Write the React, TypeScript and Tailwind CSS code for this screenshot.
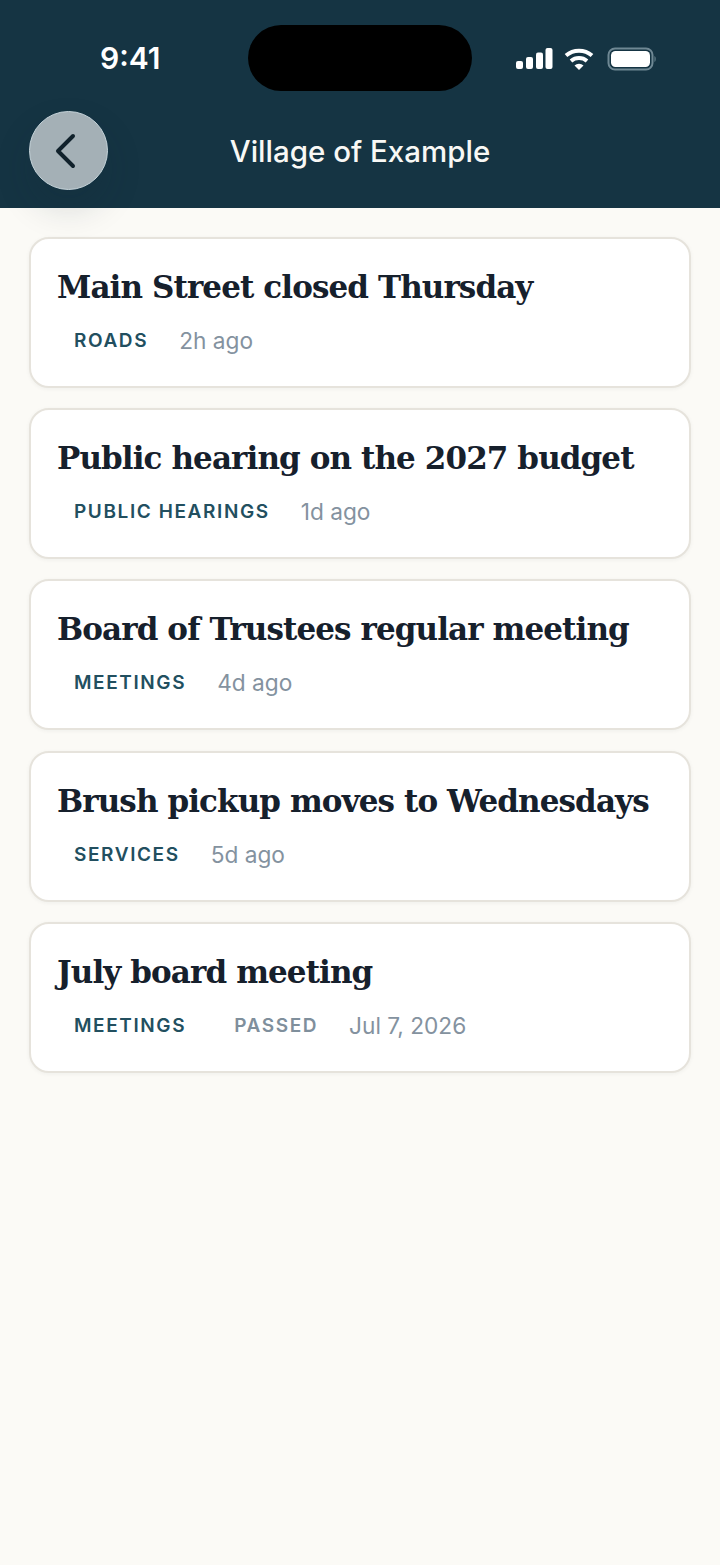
const items = [
  { title: "Main Street closed Thursday", tag: "ROADS", when: "2h ago" },
  { title: "Public hearing on the 2027 budget", tag: "PUBLIC HEARINGS", when: "1d ago" },
  { title: "Board of Trustees regular meeting", tag: "MEETINGS", when: "4d ago" },
  { title: "Brush pickup moves to Wednesdays", tag: "SERVICES", when: "5d ago" },
  { title: "July board meeting", tag: "MEETINGS", extra: "PASSED", when: "Jul 7, 2026" },
];

function StatusIcons() {
  return (
    <svg width="140" height="26" viewBox="0 0 140 26" fill="none">
      <rect x="0" y="16" width="7" height="8" rx="2" fill="#fff" />
      <rect x="10" y="12" width="7" height="12" rx="2" fill="#fff" />
      <rect x="20" y="7.500" width="7" height="16.500" rx="2" fill="#fff" />
      <rect x="29.500" y="3" width="7" height="21" rx="2" fill="#fff" />
      <path d="M50 10.500a20 20 0 0 1 26 0" stroke="#fff" strokeWidth="4" />
      <path d="M55 16a12.500 12.500 0 0 1 16 0" stroke="#fff" strokeWidth="4" />
      <path d="M58.500 20.500a6.500 6.500 0 0 1 9 0L63 25z" fill="#fff" />
      <rect x="92.500" y="3.500" width="44" height="21" rx="6.500" stroke="#6f8894" strokeWidth="2" />
      <rect x="95" y="6" width="39" height="16" rx="4.500" fill="#fff" />
      <path d="M138.500 11v6c1.500-.5 1.500-5.500 0-6z" fill="#6f8894" />
    </svg>
  );
}

export default function App() {
  return (
    <div className="min-h-[1565px] bg-[#fbfaf6] font-['Inter',sans-serif]">
      {/* Header */}
      <header className="relative h-[208px] bg-[#153443]">
        <div className="flex h-[133px] items-start justify-between">
          <span className="mt-[39px] ml-[100px] text-[30px] leading-[38px] font-semibold text-white">9:41</span>
          <div className="absolute top-[25px] left-[248px] h-[66px] w-[224px] rounded-[33px] bg-black" />
          <div className="mt-[45px] mr-[64px]">
            <StatusIcons />
          </div>
        </div>
        <h1 className="text-center text-[29.500px] leading-[36px] font-medium text-[#f8f8f5]">Village of Example</h1>
        <button
          type="button"
          className="absolute top-[111px] left-[29px] flex h-[79px] w-[79px] items-center justify-center rounded-full border border-[#c6d4da] bg-[#a4b0b6] shadow-[0_18px_36px_rgba(20,40,50,0.16)]"
        >
          <svg width="24" height="36" viewBox="0 0 24 36" fill="none" className="mr-[6px]">
            <path d="M19 3 4 18l15 15" stroke="#10212b" strokeWidth="4" strokeLinecap="round" strokeLinejoin="round" />
          </svg>
        </button>
      </header>

      {/* List */}
      <main className="flex flex-col gap-[20.400px] px-[29px] pt-[28.500px]">
        {items.map((item) => (
          <article
            key={item.title}
            className="h-[151px] rounded-[20px] border-2 border-[#e6e3dc] bg-white pt-[26px] pl-[26px] shadow-[0_1px_4px_rgba(20,30,40,0.05)]"
          >
            <h2 className="font-['DejaVu_Serif',serif] text-[31px] leading-[44px] font-bold tracking-[-0.900px] whitespace-nowrap text-[#16202c]">
              {item.title}
            </h2>
            <div className="mt-[17px] flex items-center pl-[17px]">
              <span className="text-[19px] leading-[28px] font-semibold tracking-[1.600px] text-[#224f5f]">{item.tag}</span>
              {item.extra && (
                <span className="ml-[48px] text-[19px] leading-[28px] font-semibold tracking-[1.600px] text-[#7f8f9c]">
                  {item.extra}
                </span>
              )}
              <span className="ml-[31px] text-[22.700px] leading-[30px] text-[#84929f]">{item.when}</span>
            </div>
          </article>
        ))}
      </main>
    </div>
  );
}
